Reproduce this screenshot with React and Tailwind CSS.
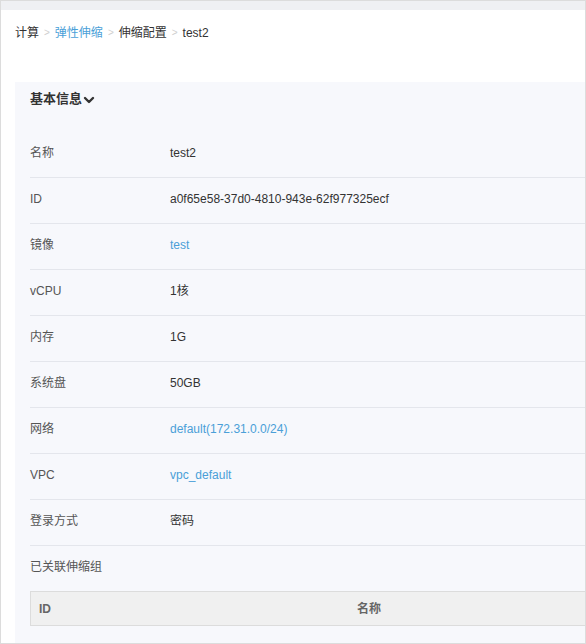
const rows = [
  { label: '名称', value: 'test2' },
  { label: 'ID', value: 'a0f65e58-37d0-4810-943e-62f977325ecf' },
  { label: '镜像', value: 'test', link: true },
  { label: 'vCPU', value: '1核' },
  { label: '内存', value: '1G' },
  { label: '系统盘', value: '50GB' },
  { label: '网络', value: 'default(172.31.0.0/24)', link: true },
  { label: 'VPC', value: 'vpc_default', link: true },
  { label: '登录方式', value: '密码' },
];

export default function App() {
  return (
    <div
      className="w-[586px] h-[644px] border border-[#dcdcdc] bg-[#eff0f3] pt-[9px] overflow-hidden text-[12px]"
      style={{ fontFamily: '"Liberation Sans", "Noto Sans CJK SC", sans-serif' }}
    >
      <div className="bg-white h-full pl-[14px] overflow-hidden">
        {/* Breadcrumb */}
        <div className="pt-[15px] h-[40px] leading-[16px] flex items-start text-[#333]">
          <span>计算</span>
          <span className="mx-[5px] text-[#cfcfcf] text-[10px]">&gt;</span>
          <span className="text-[#4a9fd8]">弹性伸缩</span>
          <span className="mx-[5px] text-[#cfcfcf] text-[10px]">&gt;</span>
          <span>伸缩配置</span>
          <span className="mx-[5px] text-[#cfcfcf] text-[10px]">&gt;</span>
          <span>test2</span>
        </div>

        {/* Panel */}
        <div className="mt-[32px] bg-[#f7f8fc] pl-[15px] h-full">
          <div className="h-[34px] flex items-center text-[13px] font-bold text-[#333]">
            基本信息
            <svg width="12" height="12" viewBox="0 0 12 12" className="ml-[1px] mt-[1px]">
              <path d="M2 4 L6 8 L10 4" fill="none" stroke="#333" strokeWidth="2.4" strokeLinecap="round" strokeLinejoin="round" />
            </svg>
          </div>
          <div className="mt-[16px]">
            {rows.map((row) => (
              <div key={row.label} className="h-[46px] pb-[4px] flex items-center border-b border-[#e4e6ec]">
                <span className="w-[140px] text-[#555]">{row.label}</span>
                <span className={row.link ? 'text-[#4a9fd8]' : 'text-[#333]'}>{row.value}</span>
              </div>
            ))}
            <div className="h-[44px] pb-[2px] flex items-center text-[#555]">已关联伸缩组</div>
            <div className="mt-[1px] -mr-[20px] h-[35px] flex items-center border border-[#dcdcdc] bg-[#f0f0f0] font-bold text-[#666]">
              <span className="w-[326px] pl-[8px]">ID</span>
              <span>名称</span>
            </div>
          </div>
        </div>
      </div>
    </div>
  );
}
